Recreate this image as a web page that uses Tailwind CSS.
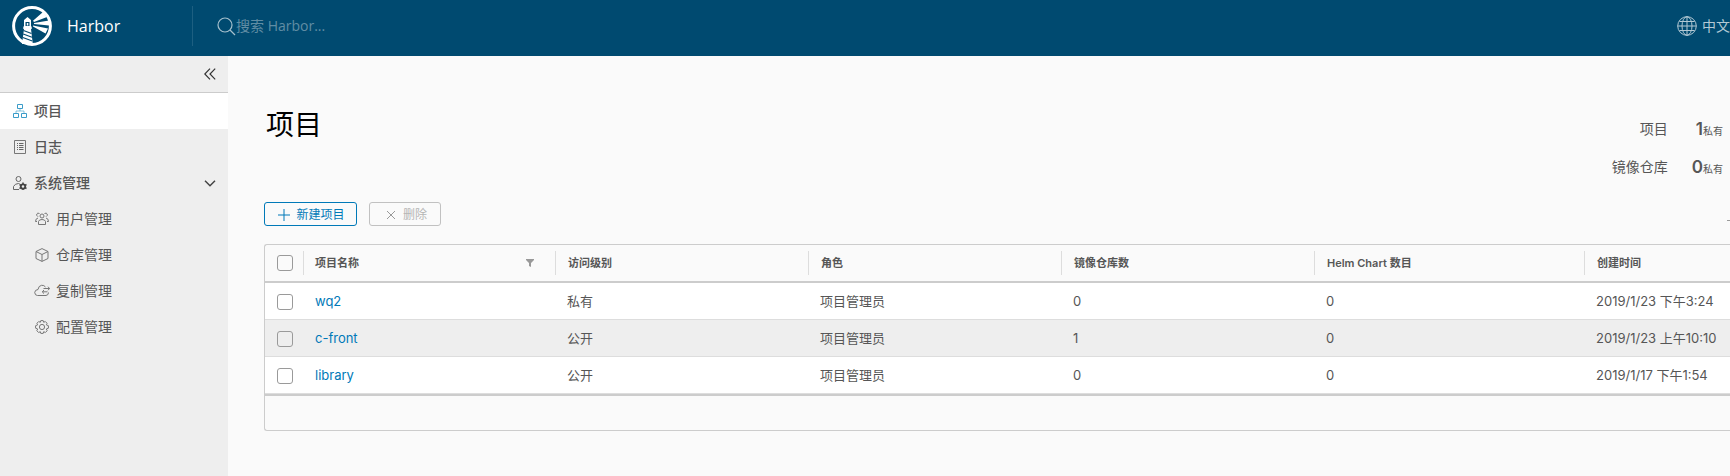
<!DOCTYPE html>
<html lang="zh-CN">
<head>
<meta charset="utf-8">
<title>Harbor</title>
<script src="https://cdn.jsdelivr.net/npm/@tailwindcss/browser@4"></script>
</head>
<body class="flex min-h-screen flex-col overflow-hidden bg-[#fafafa] font-['Inter','Noto_Sans_CJK_SC',sans-serif] text-[13px] text-[#565656]">
<header class="flex h-14 shrink-0 items-center bg-[#004a70] pb-1 font-['Open_Sans','Noto_Sans_CJK_SC',sans-serif]">
  <a href="#" class="flex w-48 shrink-0 items-center gap-[15px] pl-3 text-base text-white">
    <svg class="size-10" viewBox="0 0 40 40" aria-hidden="true">
      <circle cx="20" cy="20" r="18.400" fill="none" stroke="#fff" stroke-width="3"/>
      <path fill="#fff" d="M15.500 11l3.500 3v6.500h.7v2.500H19l1.800 15H10l2-15h-.7v-2.500h.7V14z"/>
      <path fill="#004a70" d="M13.500 16h4v4h-4z"/><path fill="#fff" d="M14.800 17h1.500v2.500h-1.500z"/>
      <path stroke="#004a70" stroke-width="1.200" d="M11.500 24.500l8 3M11.200 28l8.800 3.200M10.800 31.500l9.500 3.500"/>
      <path fill="#fff" d="M21 14.700L31 6l4 5-13 5zM22 17l15-2.500v5L22 18zM21 19.500l15 3-2.500 5L21 20.500z"/>
    </svg>
    <span>Harbor</span>
  </a>
  <label class="flex h-10 min-w-0 flex-1 items-center border-l border-[#1d5f81] pl-6">
    <svg class="size-[19px] shrink-0" viewBox="0 0 19 19" fill="none" stroke="#a5bfcc" stroke-width="1.200" aria-hidden="true"><circle cx="8" cy="8" r="7"/><path d="M13 13l5 5"/></svg>
    <input type="search" aria-label="搜索" placeholder="搜索 Harbor..." class="w-56 bg-transparent text-sm text-white outline-none placeholder:text-[#608da4]">
  </label>
  <button class="flex w-[53px] shrink-0 items-center gap-[5px] whitespace-nowrap text-sm text-[#b3c9d4]">
    <svg class="size-5 shrink-0" viewBox="0 0 20 20" fill="none" stroke="currentColor" aria-hidden="true"><circle cx="10" cy="10" r="9.300"/><ellipse cx="10" cy="10" rx="5" ry="9.300"/><path d="M10 .7v18.600M.7 10h18.600M2.500 5.500h15M2.500 14.500h15"/></svg>
    <span>中文简体</span>
  </button>
</header>
<div class="flex min-w-0 flex-1">
  <nav class="w-[228px] shrink-0 bg-[#eeeeee] text-sm">
    <div class="flex h-[37px] items-center justify-end border-b border-[#cccccc] pr-3">
      <button aria-label="收起"><svg class="size-3" viewBox="0 0 12 12" fill="none" stroke="#333" stroke-width="1.200"><path d="M6 .7L.8 6 6 11.300M11.200.7L6 6l5.200 5.300"/></svg></button>
    </div>
    <a href="#" class="flex h-9 items-center gap-[7px] bg-white pl-[13px] font-medium">
      <svg class="size-[14px]" viewBox="0 0 14 14" fill="none" stroke="#3b9cc9" aria-hidden="true"><path d="M4.500.5h5v4h-5zM.5 9.500h5v4h-5zM8.500 9.500h5v4h-5z"/><path d="M7 4.500V7M3 9.500V7h8v2.500" stroke-opacity=".6"/></svg>项目</a>
    <a href="#" class="flex h-9 items-center gap-[7px] pl-[13px] font-medium">
      <svg class="size-[14px]" viewBox="0 0 14 14" fill="none" stroke="#666" aria-hidden="true"><path d="M1.500.5h11v13h-11z" stroke="#777"/><path d="M4 3.500h1M6 3.500h4.500M4 5.500h1M6 5.500h4.500M4 7.500h1M6 7.500h4.500M4 9.500h1M6 9.500h4.500"/></svg>日志</a>
    <button class="flex h-9 w-full items-center gap-[7px] pr-3 pl-[13px] text-left font-medium">
      <svg class="size-[14px]" viewBox="0 0 14 14" fill="none" stroke="#666" aria-hidden="true"><circle cx="5.500" cy="3" r="2.500"/><path d="M6 13.500H.5v-3Q2 7.500 5.500 7.500l1 .1"/><circle cx="10" cy="10.500" r="2.200" stroke="#444" stroke-width="1.800"/><path d="M10 6.500v1.500M10 13v1M6.500 8.500l1.500.9M12 11.600l1.500.9M6.500 12.500l1.500-.9M12 9.400l1.500-.9" stroke="#444" stroke-width="1.500"/></svg>
      <span class="flex-1">系统管理</span>
      <svg class="h-[7px] w-3" viewBox="0 0 12 7" fill="none" stroke="#444" stroke-width="1.500" aria-hidden="true"><path d="M1 .8l5 5 5-5"/></svg>
    </button>
    <a href="#" class="flex h-9 items-center gap-[7px] pl-[35px]">
      <svg class="size-[14px]" viewBox="0 0 14 14" fill="none" stroke="#777" aria-hidden="true"><circle cx="7" cy="4" r="2"/><path d="M3.500 12.500v-3Q4 7.500 7 7.500t3.500 2v3zM4.500 1.500Q2.500.5 1.800 2T3 4.700M9.500 1.500Q11.500.5 12.200 2T11 4.700M3 6Q.5 6.500.5 9.500H2M11 6q2.500.5 2.500 3.500H12"/></svg>用户管理</a>
    <a href="#" class="flex h-9 items-center gap-[7px] pl-[35px]">
      <svg class="size-[14px]" viewBox="0 0 14 14" fill="none" stroke="#777" aria-hidden="true"><path d="M7 .6l6 2.900v7L7 13.400 1 10.500v-7zM1 3.500l6 3 6-3M7 6.500v6.900"/></svg>仓库管理</a>
    <a href="#" class="flex h-9 items-center gap-[6px] pl-[34px]">
      <svg class="h-[14px] w-4" viewBox="0 0 16 14" fill="none" stroke="#777" aria-hidden="true"><path d="M11.500 3Q10 1 7.500 1.300 4.500 1.800 4 5.500 1 5.700.7 8.500 1 11.500 3.500 11.500H12q2.500-.3 2.500-3M8.500 7.800h5M10 6L8.200 7.800 10 9.600M9.500 4.500h6M14 2.700l1.500 1.800L14 6.300"/></svg>复制管理</a>
    <a href="#" class="flex h-9 items-center gap-[7px] pl-[35px]">
      <svg class="size-[14px]" viewBox="0 0 14 14" fill="none" stroke="#777" stroke-linejoin="round" aria-hidden="true"><circle cx="7" cy="7" r="2.600"/><path d="M5.800.6h2.400l.5 1.700 1.600-.8 1.800 1.800-.8 1.500 2.100.9v2.500l-2.100.8.9 1.700-1.800 1.800-1.700-.8-.5 1.700H5.800l-.5-1.700-1.700.8-1.800-1.800.9-1.700-2.100-.8V5.700l2.100-.9-.8-1.500 1.800-1.800 1.600.8z"/></svg>配置管理</a>
  </nav>
  <main class="min-w-0 flex-1 overflow-hidden pl-9">
    <div class="flex h-[146px] justify-between pt-12">
      <h1 class="pl-[2px] text-[28px] leading-[42px] text-black">项目</h1>
      <dl class="grid auto-rows-[38px] grid-cols-[auto_auto] content-start items-center gap-x-6 pt-[6px] pr-[7px] text-right text-sm">
        <dt>项目</dt><dd class="text-[10px]"><b class="text-[17px] font-semibold">1</b>私有</dd>
        <dt>镜像仓库</dt><dd class="text-[10px]"><b class="text-[17px] font-semibold">0</b>私有</dd>
      </dl>
    </div>
    <div class="flex h-6 gap-3 text-xs">
      <button class="flex h-6 w-[93px] items-center justify-center gap-[6px] rounded-[3px] border border-[#0079b8] pt-[2px] pl-[2px] text-[#0079b8]"><svg class="size-3" viewBox="0 0 12 12" fill="none" stroke="currentColor" aria-hidden="true"><path d="M6 0v12M0 6h12"/></svg>新建项目</button>
      <button disabled class="flex h-6 w-[72px] items-center justify-center gap-[6px] rounded-[3px] border border-[#c1c1c1] pt-[2px] pl-[2px] text-[#b5b5b5]"><svg class="size-3" viewBox="0 0 12 12" fill="none" stroke="#999" aria-hidden="true"><path d="M2 2l8 8M10 2l-8 8"/></svg>删除</button>
      <input type="text" aria-label="过滤项目" class="ml-auto h-[19px] w-[3px] border-b border-[#9a9a9a] bg-transparent">
    </div>
    <div class="mt-[18px] rounded-l-[3px] border border-r-0 border-[#cccccc]">
      <table class="w-full table-fixed border-separate border-spacing-0 whitespace-nowrap text-left">
        <colgroup><col class="w-[38px]"><col class="w-[252px]"><col class="w-[253px]"><col class="w-[253px]"><col class="w-[253px]"><col class="w-[270px]"><col></colgroup>
        <thead class="text-[11px] leading-6">
          <tr class="h-[38px]">
            <th class="border-b-2 border-[#cccccc] p-0 pl-3"><input type="checkbox" aria-label="全选" class="block size-4 appearance-none rounded-[3px] border border-[#9a9a9a]"></th>
            <th class="border-b-2 border-[#cccccc] p-0 font-semibold"><div class="flex items-center justify-between border-l border-[#dddddd] pr-[21px] pl-[11px]">项目名称<button aria-label="筛选"><svg class="size-2" viewBox="0 0 8 8" fill="#999"><path d="M0 0h8v1L5 4v4L3 7V4L0 1z"/></svg></button></div></th>
            <th class="border-b-2 border-[#cccccc] p-0 font-semibold"><div class="border-l border-[#dddddd] pl-3">访问级别</div></th>
            <th class="border-b-2 border-[#cccccc] p-0 font-semibold"><div class="border-l border-[#dddddd] pl-3">角色</div></th>
            <th class="border-b-2 border-[#cccccc] p-0 font-semibold"><div class="border-l border-[#dddddd] pl-3">镜像仓库数</div></th>
            <th class="border-b-2 border-[#cccccc] p-0 font-semibold"><div class="border-l border-[#dddddd] pl-3">Helm Chart 数目</div></th>
            <th class="border-b-2 border-[#cccccc] p-0 font-semibold"><div class="border-l border-[#dddddd] pl-3">创建时间</div></th>
          </tr>
        </thead>
        <tbody class="[&_td]:border-b [&_td]:border-[#dddddd] [&_td]:pt-[2px] [&_td]:pl-3 [&_a]:text-[#0079b8]">
          <tr class="h-[37px] bg-white"><td><input type="checkbox" aria-label="wq2" class="block size-4 appearance-none rounded-[3px] border border-[#9a9a9a]"></td><td><a href="#">wq2</a></td><td>私有</td><td>项目管理员</td><td>0</td><td>0</td><td>2019/1/23 下午3:24</td></tr>
          <tr class="h-[37px] bg-[#eeeeee]"><td><input type="checkbox" aria-label="c-front" class="block size-4 appearance-none rounded-[3px] border border-[#9a9a9a]"></td><td><a href="#">c-front</a></td><td>公开</td><td>项目管理员</td><td>1</td><td>0</td><td>2019/1/23 上午10:10</td></tr>
          <tr class="h-[37px] bg-white"><td><input type="checkbox" aria-label="library" class="block size-4 appearance-none rounded-[3px] border border-[#9a9a9a]"></td><td><a href="#">library</a></td><td>公开</td><td>项目管理员</td><td>0</td><td>0</td><td>2019/1/17 下午1:54</td></tr>
        </tbody>
      </table>
      <div class="h-9 border-t-2 border-[#cccccc]"></div>
    </div>
  </main>
</div>
</body>
</html>
